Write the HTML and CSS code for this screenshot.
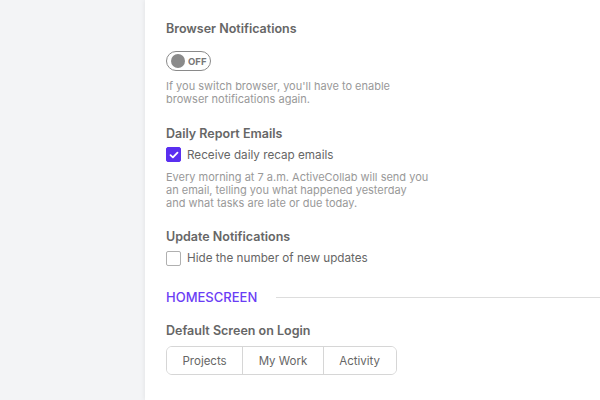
FILE: index.html
```html
<!DOCTYPE html>
<html lang="en">
<head>
    <meta charset="UTF-8">
    <meta name="viewport" content="width=device-width, initial-scale=1.0">
    <title>Settings</title>
    <link rel="stylesheet" href="styles.css">
</head>
<body>
    <aside class="sidebar"></aside>

    <main class="panel">
        <section class="setting">
            <h3>Browser Notifications</h3>
            <button class="toggle"><span class="knob"></span>OFF</button>
            <p class="hint">If you switch browser, you'll have to enable<br>browser notifications again.</p>
        </section>

        <section class="setting">
            <h3>Daily Report Emails</h3>
            <label class="check">
                <span class="box checked">
                    <svg width="10" height="8" viewBox="0 0 10 8"><path d="M1.5 4.2 L3.9 6.4 L8.5 1.6" fill="none" stroke="#fff" stroke-width="1.8" stroke-linecap="round" stroke-linejoin="round"/></svg>
                </span>
                Receive daily recap emails
            </label>
            <p class="hint">Every morning at 7 a.m. ActiveCollab will send you<br>an email, telling you what happened yesterday<br>and what tasks are late or due today.</p>
        </section>

        <section class="setting">
            <h3>Update Notifications</h3>
            <label class="check">
                <span class="box"></span>
                Hide the number of new updates
            </label>
        </section>

        <div class="divider">
            <h2>HOMESCREEN</h2>
            <span class="rule"></span>
        </div>

        <section class="setting">
            <h3>Default Screen on Login</h3>
            <div class="segments">
                <button>Projects</button>
                <button>My Work</button>
                <button>Activity</button>
            </div>
        </section>
    </main>
</body>
</html>
```

FILE: styles.css
```css
body {
    font-family: "Inter", "Liberation Sans", sans-serif;
    margin: 0;
    padding: 0;
    display: flex;
    height: 400px;
    overflow: hidden;
    background-color: #f3f4f6;
    color: #666;
}

.sidebar {
    width: 145px;
    flex-shrink: 0;
    background-color: #f3f4f6;
}

.panel {
    flex: 1;
    background-color: #fff;
    box-shadow: -1px 0 4px rgba(0, 0, 0, 0.06);
    padding: 21px 0 0 21px;
}

.setting {
    margin-bottom: 19px;
}

.setting h3 {
    font-size: 12.5px;
    font-weight: 600;
    color: #666;
    margin: 0 0 5px 0;
    line-height: 16px;
}

.toggle {
    display: flex;
    align-items: center;
    gap: 3px;
    width: 45px;
    height: 20px;
    padding: 0 0 0 4px;
    border: 1px solid #8a8a8a;
    border-radius: 10px;
    background: #fff;
    font-family: inherit;
    font-size: 9.5px;
    font-weight: 700;
    color: #777;
    margin: 14px 0 9px 0;
}

.knob {
    width: 14px;
    height: 14px;
    border-radius: 50%;
    background-color: #8a8a8a;
}

.hint {
    font-size: 11px;
    line-height: 13.3px;
    color: #999;
    margin: 0;
}

.check {
    display: flex;
    align-items: center;
    gap: 6px;
    font-size: 11.7px;
    color: #666;
    margin-bottom: 8px;
    height: 16px;
}

.box {
    width: 13px;
    height: 13px;
    border: 1px solid #b0b0b0;
    border-radius: 2px;
    display: flex;
    align-items: center;
    justify-content: center;
}

.box.checked {
    background-color: #5a2ff0;
    border-color: #5a2ff0;
}

.divider {
    display: flex;
    align-items: center;
    gap: 19px;
    margin: 23px 0 18px 0;
}

.divider h2 {
    font-size: 13px;
    font-weight: 500;
    color: #6a3df5;
    margin: 0;
}

.rule {
    flex: 1;
    height: 1px;
    background-color: #ddd;
}

.segments {
    display: inline-flex;
    border: 1px solid #d6d6d6;
    border-radius: 6px;
    overflow: hidden;
    margin-top: 2px;
}

.segments button {
    font-family: inherit;
    font-size: 11.5px;
    color: #666;
    background: #fff;
    border: none;
    border-right: 1px solid #d6d6d6;
    height: 27px;
    padding: 0 15.5px;
}

.segments button:last-child {
    border-right: none;
}
```
